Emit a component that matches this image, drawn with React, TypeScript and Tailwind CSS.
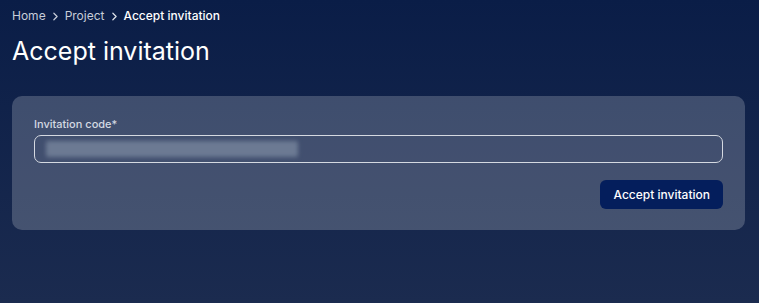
import { ChevronRight } from "lucide-react";

export default function App() {
  return (
    <div
      className="min-h-[303px] w-full bg-gradient-to-b from-[#0a1d47] to-[#1b2b4f] pl-3 pr-[14px] pt-[6px] text-white"
      style={{ fontFamily: "Inter, 'Noto Sans', sans-serif" }}
    >
      <nav className="flex h-[20px] items-center text-[12px]">
        <span className="text-[#c7cdd9]">Home</span>
        <ChevronRight className="mx-[3px] h-[13px] w-[13px] text-[#c7cdd9]" strokeWidth={2.25} />
        <span className="text-[#c7cdd9]">Project</span>
        <ChevronRight className="mx-[3px] h-[13px] w-[13px] text-[#dfe3ea]" strokeWidth={2.25} />
        <span className="font-medium text-white">Accept invitation</span>
      </nav>
      <h1 className="mt-[8px] text-[25px] leading-[34px]">Accept invitation</h1>

      <div className="mt-[28px] rounded-[10px] bg-white/[0.2] px-[22px] pb-[21px] pt-[21px]">
        <label className="block text-[11px] font-medium leading-[14px] text-[#d4d9e2]">
          Invitation code*
        </label>
        <div className="mt-[4px] flex h-[28px] items-center rounded-[7px] border border-[#d5d9e1] px-[11px]">
          <div className="h-[16px] w-[252px] rounded-[2px] bg-[#6c7a93] blur-[2px]" />
        </div>
        <div className="mt-[17px] flex justify-end">
          <button className="h-[29px] rounded-[6px] bg-[#041e5c] px-[13px] text-[12px] font-medium text-white">
            Accept invitation
          </button>
        </div>
      </div>
    </div>
  );
}
